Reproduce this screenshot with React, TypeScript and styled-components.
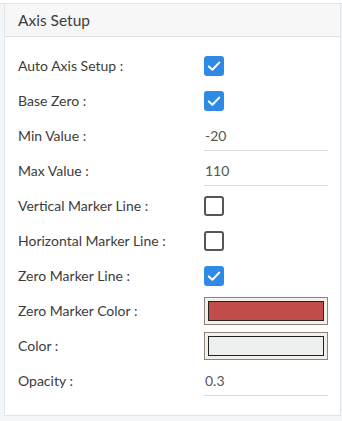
import styled, { createGlobalStyle } from 'styled-components';

const GlobalStyle = createGlobalStyle`
  html, body {
    margin: 0;
    padding: 0;
    background: #fff;
  }
  body {
    font-family: Lato, "Noto Sans", sans-serif;
    color: #3a3a3a;
  }
`;

const Page = styled.div`
  width: 342px;
  height: 421px;
  display: flex;
  flex-direction: column;
  overflow: hidden;
  background: #f3f6f9;
`;

const Spacer = styled.div`
  height: 3px;
  background: #fff;
  border-bottom: 1px solid #dfe4e8;
`;

const Panel = styled.section`
  margin-left: 4px;
  width: 335px;
  background: #fff;
  border-left: 1px solid #dfe4e8;
  border-right: 1px solid #dfe4e8;
  border-bottom: 1px solid #dfe4e8;
`;

const Header = styled.div`
  height: 32px;
  display: flex;
  align-items: center;
  padding-left: 13px;
  background: #f7f7f7;
  border-bottom: 1px solid #dfe2e4;
  font-size: 15.5px;
  color: #3d3d3d;
`;

const Body = styled.div`
  padding: 11px 0 17px 13px;
  display: flex;
  flex-direction: column;
`;

const Row = styled.div`
  height: 35px;
  display: grid;
  grid-template-columns: 186px 124px;
  align-items: center;
`;

const Label = styled.span`
  font-size: 14px;
  color: #3c3c3c;
`;

const Box = styled.span<{ $checked?: boolean }>`
  width: 20px;
  height: 20px;
  box-sizing: border-box;
  border-radius: 3px;
  display: flex;
  align-items: center;
  justify-content: center;
  background: ${(p) => (p.$checked ? '#2f8ae6' : '#fff')};
  border: ${(p) => (p.$checked ? 'none' : '2px solid #555')};
`;

const Field = styled.div`
  height: 30px;
  box-sizing: border-box;
  display: flex;
  align-items: center;
  padding-left: 1px;
  border-bottom: 1px solid #dcdcdc;
  font-size: 14px;
  color: #555;
`;

const Swatch = styled.div`
  height: 28px;
  box-sizing: border-box;
  padding: 3px;
  border: 1px solid #8f8278;
  background: #f3efeb;
  display: flex;
`;

const SwatchFill = styled.div<{ $color: string }>`
  flex: 1;
  border: 1px solid #222;
  background: ${(p) => p.$color};
`;

function Check({ checked }: { checked?: boolean }) {
  return (
    <Box $checked={checked}>
      {checked && (
        <svg width="20" height="20" viewBox="0 0 20 20">
          <polyline
            points="4.8,10.4 8.4,13.8 15.2,6.6"
            fill="none"
            stroke="#fff"
            strokeWidth="2"
            strokeLinecap="round"
            strokeLinejoin="round"
          />
        </svg>
      )}
    </Box>
  );
}

export default function App() {
  return (
    <>
      <GlobalStyle />
      <Page>
        <Spacer />
        <Panel>
          <Header>Axis Setup</Header>
          <Body>
            <Row>
              <Label>Auto Axis Setup :</Label>
              <Check checked />
            </Row>
            <Row>
              <Label>Base Zero :</Label>
              <Check checked />
            </Row>
            <Row>
              <Label>Min Value :</Label>
              <Field>-20</Field>
            </Row>
            <Row>
              <Label>Max Value :</Label>
              <Field>110</Field>
            </Row>
            <Row>
              <Label>Vertical Marker Line :</Label>
              <Check />
            </Row>
            <Row>
              <Label>Horizontal Marker Line :</Label>
              <Check />
            </Row>
            <Row>
              <Label>Zero Marker Line :</Label>
              <Check checked />
            </Row>
            <Row>
              <Label>Zero Marker Color :</Label>
              <Swatch>
                <SwatchFill $color="#c04d4a" />
              </Swatch>
            </Row>
            <Row>
              <Label>Color :</Label>
              <Swatch>
                <SwatchFill $color="#eef0ef" />
              </Swatch>
            </Row>
            <Row>
              <Label>Opacity :</Label>
              <Field>0.3</Field>
            </Row>
          </Body>
        </Panel>
      </Page>
    </>
  );
}
